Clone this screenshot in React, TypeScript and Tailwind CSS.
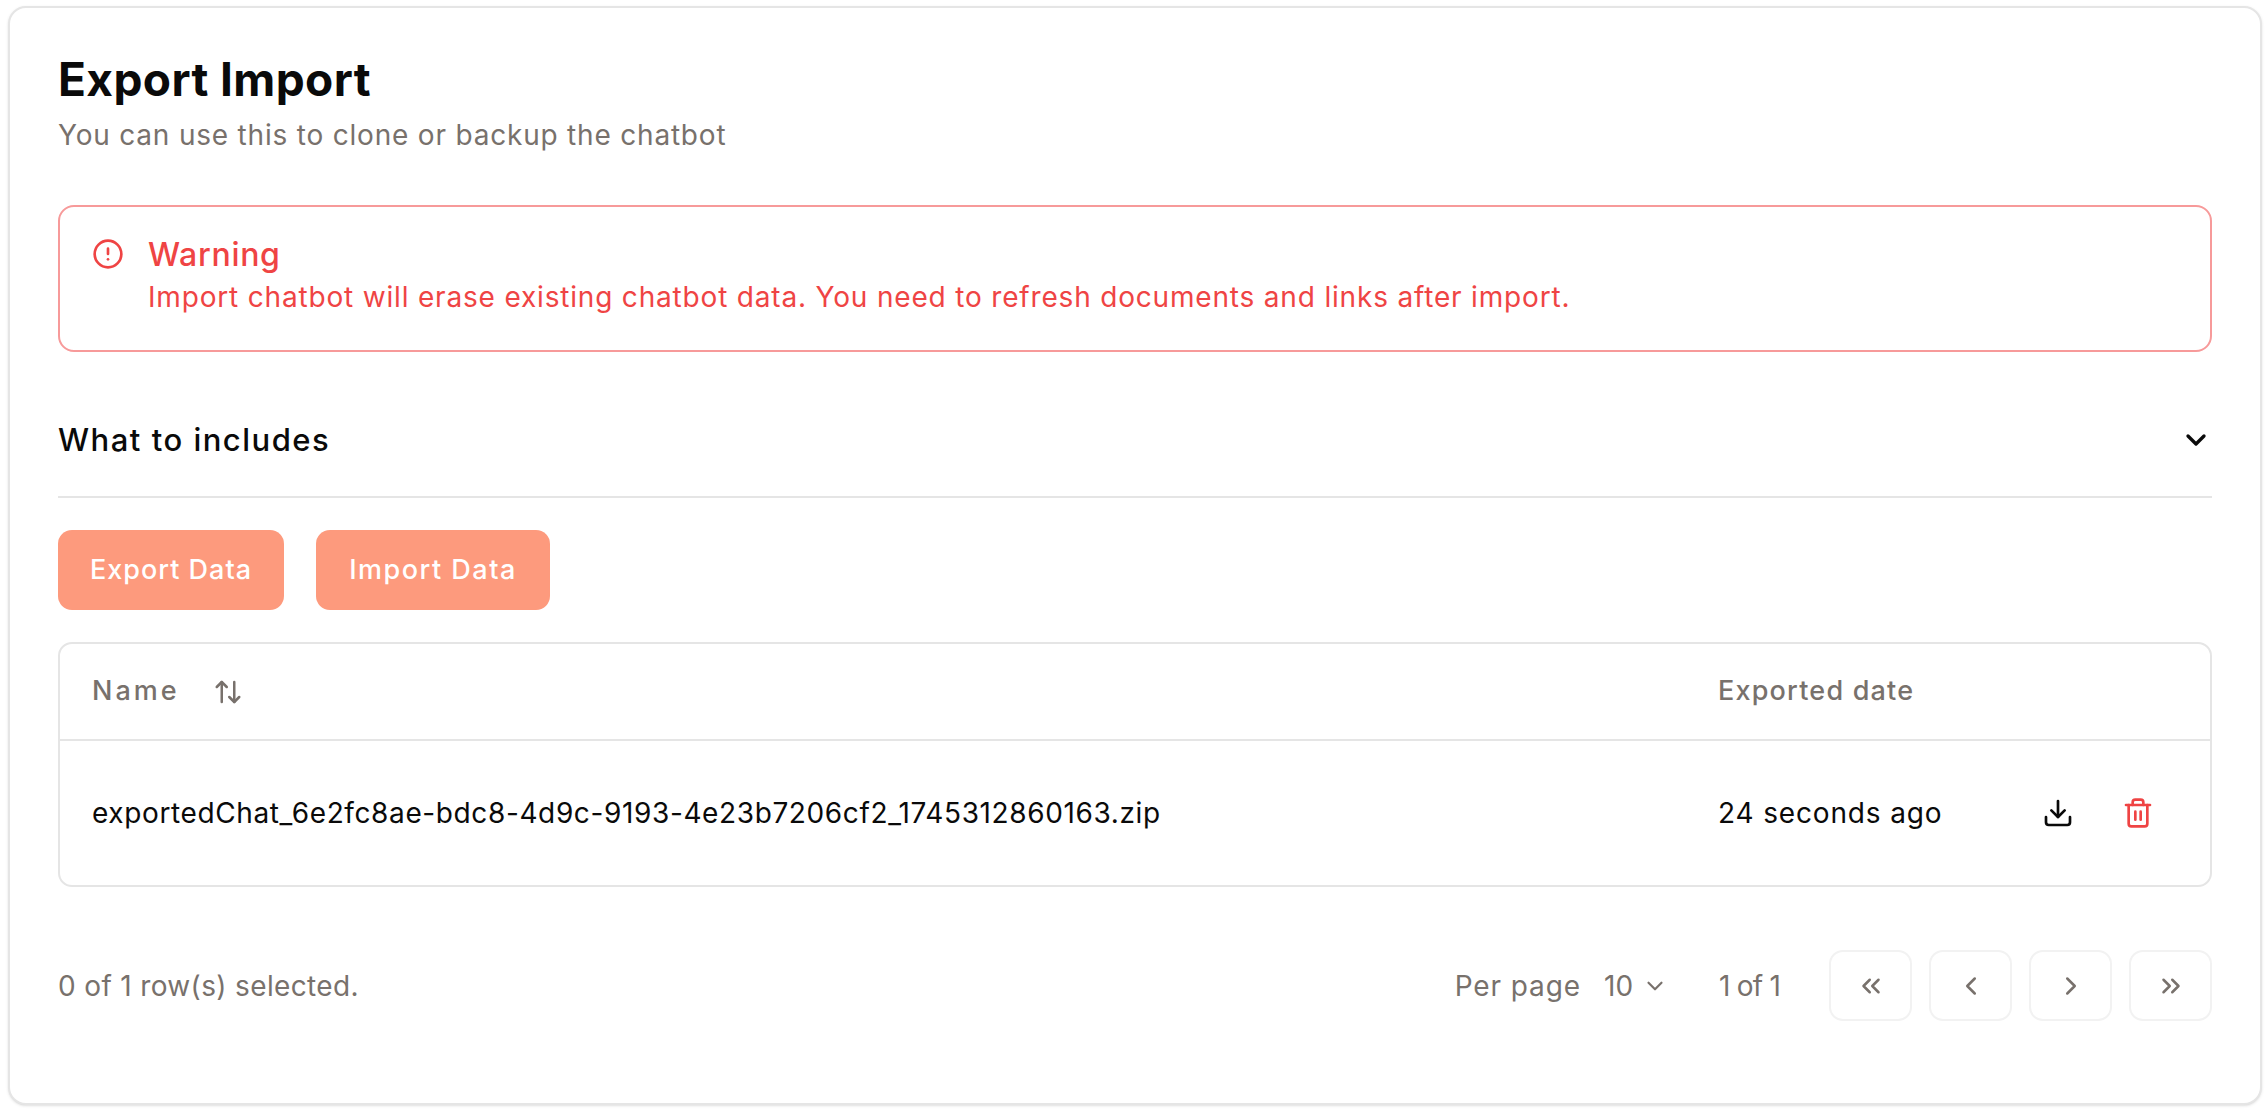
import { ArrowUpDown, ChevronDown, ChevronLeft, ChevronRight, ChevronsLeft, ChevronsRight, CircleAlert, Download, Trash2 } from 'lucide-react';

const PagerButton = ({ children }: { children: React.ReactNode }) => (
    <button className="w-[83px] h-[71px] flex items-center justify-center border-2 border-[#f2f2f2] rounded-[14px] text-[#78716c]">
        {children}
    </button>
);

export default function App() {
    return (
        <div className="bg-white min-h-[1114px] pt-[6px] px-[8px] font-['Inter',sans-serif]">
            <div className="h-[1099px] w-[2254px] border-2 border-[#e5e5e5] rounded-[18px] bg-white px-[48px] pt-[47px] shadow-sm">
                <h1 className="text-[46px] leading-[48px] font-bold tracking-[0.4px] text-[#0a0a0a]">Export Import</h1>
                <p className="mt-[11px] text-[28px] leading-[42px] tracking-[0.8px] text-[#78716c]">You can use this to clone or backup the chatbot</p>

                <div className="mt-[49px] h-[147px] border-2 border-[#f79a9a] rounded-[16px] px-[32px] pt-[26px] flex gap-[24px] text-[#ef4444]">
                    <CircleAlert size={32} strokeWidth={2} className="mt-[5px] shrink-0" />
                    <div>
                        <div className="text-[32px] leading-[43px] font-medium tracking-[0.7px]">Warning</div>
                        <div className="text-[28px] leading-[42px] tracking-[0.82px]">Import chatbot will erase existing chatbot data. You need to refresh documents and links after import.</div>
                    </div>
                </div>

                <div className="h-[146px] border-b-2 border-[#e5e5e5] flex items-center justify-between pt-[32px]">
                    <span className="text-[31px] font-medium tracking-[1.5px] text-[#0a0a0a]">What to includes</span>
                    <ChevronDown size={32} strokeWidth={2.5} className="text-[#0a0a0a]" />
                </div>

                <div className="mt-[32px] flex gap-[32px]">
                    <button className="w-[226px] h-[80px] rounded-[14px] bg-[#fd9a7d] text-white text-[27px] font-medium tracking-[1px]">Export Data</button>
                    <button className="w-[234px] h-[80px] rounded-[14px] bg-[#fd9a7d] text-white text-[27px] font-medium tracking-[1.5px]">Import Data</button>
                </div>

                <div className="mt-[32px] h-[245px] border-2 border-[#e5e5e5] rounded-[14px]">
                    <div className="h-[97px] border-b-2 border-[#e5e5e5] flex items-center pl-[32px] text-[#78716c] text-[27px] font-medium tracking-[1.2px]">
                        <div className="flex-1 flex items-center gap-[33px]">
                            <span className="tracking-[3px]">Name</span>
                            <ArrowUpDown size={30} strokeWidth={2} />
                        </div>
                        <div className="w-[492px]">Exported date</div>
                    </div>
                    <div className="flex items-center h-[144px] pl-[32px] text-[28px] tracking-[0.62px] text-[#0a0a0a]">
                        <div className="flex-1">exportedChat_6e2fc8ae-bdc8-4d9c-9193-4e23b7206cf2_1745312860163.zip</div>
                        <div className="w-[492px] flex items-center">
                            <span className="w-[324px] tracking-[0.85px]">24 seconds ago</span>
                            <Download size={32} strokeWidth={2} className="text-[#0a0a0a]" />
                            <Trash2 size={32} strokeWidth={2} className="ml-[48px] text-[#ef4444]" />
                        </div>
                    </div>
                </div>

                <div className="mt-[63px] flex items-center justify-between text-[28px] text-[#78716c]">
                    <span className="tracking-[0.35px]">0 of 1 row(s) selected.</span>
                    <div className="flex items-center">
                        <span className="tracking-[0.9px]">Per page</span>
                        <span className="ml-[23px]">10</span>
                        <ChevronDown size={26} strokeWidth={2} className="ml-[9px]" />
                        <span className="ml-[51px] mr-[49px] tracking-[-0.8px]">1 of 1</span>
                        <div className="flex gap-[17px]">
                            <PagerButton><ChevronsLeft size={30} strokeWidth={2} /></PagerButton>
                            <PagerButton><ChevronLeft size={30} strokeWidth={2} /></PagerButton>
                            <PagerButton><ChevronRight size={30} strokeWidth={2} /></PagerButton>
                            <PagerButton><ChevronsRight size={30} strokeWidth={2} /></PagerButton>
                        </div>
                    </div>
                </div>
            </div>
        </div>
    );
}
